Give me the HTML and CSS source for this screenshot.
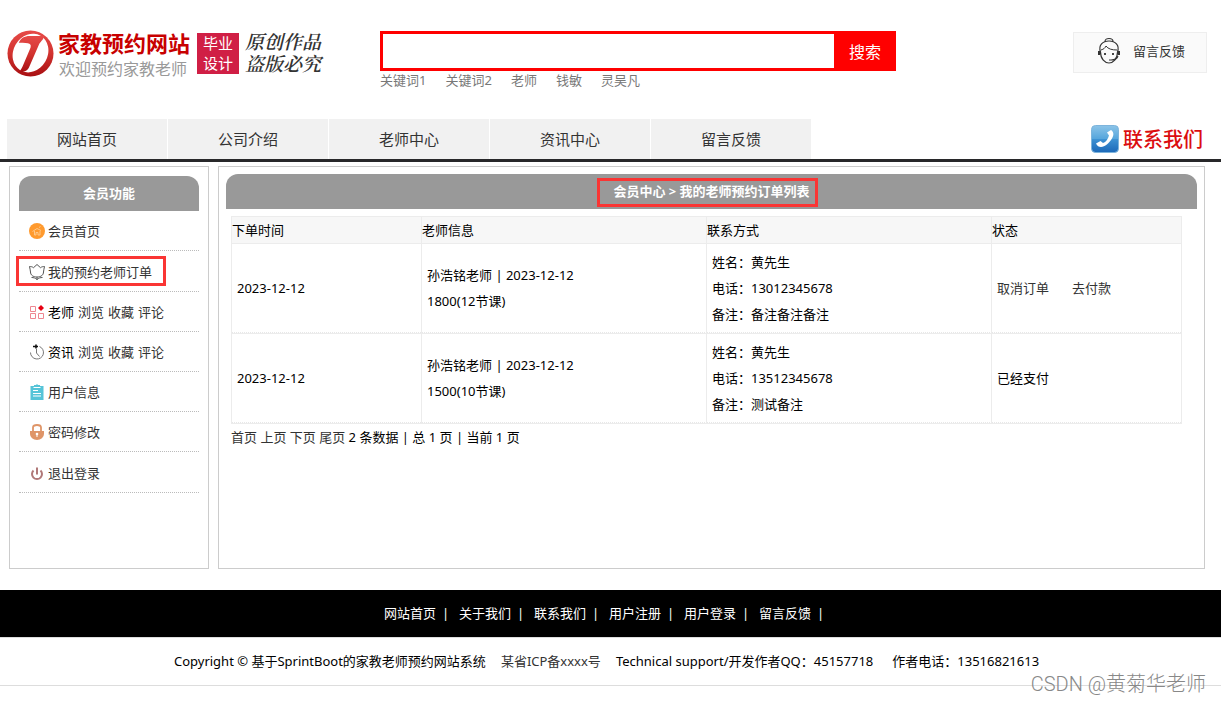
FILE: index.html
```html
<!DOCTYPE html>
<html lang="zh-CN">
<head>
<meta charset="utf-8">
<title>家教预约网站</title>
<link rel="stylesheet" href="styles.css">
</head>
<body>
<header class="header">
  <a class="logo" href="#">
    <svg class="logo-mark" viewBox="0 0 48 48" aria-hidden="true">
      <defs>
        <linearGradient id="ring" x1="0" y1="0" x2="0" y2="1"><stop offset="0" stop-color="#e64a48"/><stop offset="0.5" stop-color="#d2332f"/><stop offset="1" stop-color="#a80f12"/></linearGradient>
      </defs>
      <circle cx="24" cy="24" r="23.5" fill="url(#ring)"/>
      <ellipse cx="24" cy="23.500" rx="17.500" ry="20.500" transform="rotate(30 24 23.500)" fill="#fff"/>
      <path d="M12 13c2-5 6-7 11-7h15c-1 4-3 5-5 8L23 37c-2 5-5 6-11 6 2-2 3-4 4-6l8-19c1-4 0-5-12-5z" fill="url(#ring)"/>
    </svg>
    <span class="logo-text"><strong class="logo-name">家教预约网站</strong><span class="logo-sub">欢迎预约家教老师</span></span>
    <span class="stamp">毕业<br>设计</span>
    <span class="script">原创作品<br>盗版必究</span>
  </a>
  <div class="search">
    <form class="search-form">
      <input class="search-input" type="text" aria-label="搜索关键词">
      <button class="search-button" type="button">搜索</button>
    </form>
    <div class="keywords"><a href="#">关键词1</a><a href="#">关键词2</a><a href="#">老师</a><a href="#">钱敏</a><a href="#">灵吴凡</a></div>
  </div>
  <a class="feedback" href="#">
    <svg class="feedback-icon" viewBox="0 0 24 28" fill="none" stroke="#333" stroke-width="1.200" aria-hidden="true">
      <path d="M8 4.500c0-4 8-4 8 0M3.500 15C1 8 6 4 12 4s11 4 8.500 11c0 7-4.500 11-8.500 11s-8.500-4-8.500-11z"/>
      <path d="M4 13c3-1 4-2 5-4 2 3 6 4 11 4" stroke-width="1"/>
      <path d="M2 14v4M22 14v4" stroke-width="2"/>
      <path d="M8 16v2M16 16v2" stroke-width="1.800"/>
      <path d="M21 19c-1 3-4 4-7 4h-2"/>
    </svg>
    <span>留言反馈</span>
  </a>
</header>
<nav class="nav">
  <div class="nav-items"><a href="#">网站首页</a><a href="#">公司介绍</a><a href="#">老师中心</a><a href="#">资讯中心</a><a href="#">留言反馈</a></div>
  <a class="contact" href="#">
    <svg class="contact-icon" viewBox="0 0 28 28" aria-hidden="true">
      <defs><linearGradient id="blue" x1="0" y1="0" x2="0" y2="1"><stop offset="0" stop-color="#8cc4e8"/><stop offset="0.500" stop-color="#55a5dc"/><stop offset="0.520" stop-color="#3c90d2"/><stop offset="1" stop-color="#1c68b8"/></linearGradient></defs>
      <rect x="0.500" y="0.500" width="27" height="27" rx="4" fill="url(#blue)" stroke="#7db4dc"/>
      <path d="M16 7.500l4-2.500c3 2 3 5 1 8.500-3 5-7 8-11 8.500-2 0-4-1-5-3.500l4.500-2.500 2.500 2c3-1 5-4 6-7.500z" fill="#fff"/>
    </svg>
    联系我们
  </a>
</nav>
<div class="page">
  <aside class="sidebar">
    <h2 class="bar">会员功能</h2>
    <ul class="menu">
      <li><svg class="icon" viewBox="0 0 16 16"><circle cx="8" cy="8" r="8" fill="#ff9a2e"/><path d="M3.500 8.500L8 5.500l4 2M5.500 8v4h1.500V9.500h2V12h2V8M10 4.500l1.500-1" fill="none" stroke="#ffc888"/></svg><a href="#">会员首页</a></li>
      <li class="marked"><svg class="icon" viewBox="0 0 16 16" fill="none" stroke="#555"><path d="M.5 2.500c1.500 0 3 .3 4 1.200L8 .5l3.500 3.200c1-.9 2.500-1.200 4-1.200-.2 2-1 3.500-1 5.500C14.500 11 12 13 8 13S1.500 11 1.500 8c0-2-.8-3.500-1-5.500zM8 13v3M2.500 13.500c2 0 4 .5 5.500 2 1.500-1.500 3.500-2 5.500-2"/></svg><a href="#">我的预约老师订单</a></li>
      <li><svg class="icon" viewBox="0 0 16 16" fill="none" stroke="#ee8791"><path d="M1.500 2.500h5v5h-5zM1.500 9.500h5v5h-5zM9.500 9.500h5v5h-5z"/><path d="M12 1l3 3-3 3-3-3z" fill="#e60012" stroke="none"/></svg><span class="topic"><span>老师</span> <a href="#">浏览</a> <a href="#">收藏</a> <a href="#">评论</a></span></li>
      <li><svg class="icon" viewBox="0 0 16 16" fill="none" stroke="#777"><path d="M10.500 2.500a6.500 6.500 0 1 1-9 6M7.500 5v4l3 3.500"/><path d="M4 2.500h5M7 .5v4" stroke="#111" stroke-width="1.600"/></svg><span class="topic"><span>资讯</span> <a href="#">浏览</a> <a href="#">收藏</a> <a href="#">评论</a></span></li>
      <li><svg class="icon" viewBox="0 0 16 16"><path d="M1.500 2H5V1h2l1-1 1 1h2v1h3.500v14h-13z" fill="#56c4d8"/><path d="M4.500 3.500h7M4 6.500h5M4 9.500h8M4 12h8" stroke="#fff"/></svg><a href="#">用户信息</a></li>
      <li><svg class="icon" viewBox="0 0 16 16"><path d="M4 8V3.500Q4 1 8 1t4 2.500V8" fill="none" stroke="#df9568" stroke-width="1.800"/><path d="M1 7h14v3a7 6 0 0 1-14 0z" fill="#df9568"/><circle cx="8" cy="10" r="1.300" fill="#fff"/><path d="M8 10v3" stroke="#fff"/></svg><a href="#">密码修改</a></li>
      <li class="last"><svg class="icon" viewBox="0 0 16 16" fill="none" stroke="#b07878" stroke-width="2"><path d="M4.500 5.500a5 5 0 1 0 7 0M8 2.500v7"/></svg><a href="#">退出登录</a></li>
    </ul>
  </aside>
  <main class="main">
    <h1 class="bar"><span class="title">会员中心 &gt; 我的老师预约订单列表</span></h1>
    <table class="orders">
      <colgroup><col class="narrow"><col class="wide"><col class="wide"><col class="narrow"></colgroup>
      <thead><tr><th>下单时间</th><th>老师信息</th><th>联系方式</th><th>状态</th></tr></thead>
      <tbody>
        <tr><td>2023-12-12</td><td>孙浩铭老师 | 2023-12-12<br>1800(12节课)</td><td>姓名：黄先生<br>电话：13012345678<br>备注：备注备注备注</td><td><div class="actions"><a href="#">取消订单</a><a href="#">去付款</a></div></td></tr>
        <tr><td>2023-12-12</td><td>孙浩铭老师 | 2023-12-12<br>1500(10节课)</td><td>姓名：黄先生<br>电话：13512345678<br>备注：测试备注</td><td>已经支付</td></tr>
      </tbody>
    </table>
    <p class="pager"><a href="#">首页</a> <a href="#">上页</a> <a href="#">下页</a> <a href="#">尾页</a> 2 条数据 | 总 1 页 | 当前 1 页</p>
  </main>
</div>
<footer class="footer">
  <div class="links"><a href="#">网站首页</a><span>|</span><a href="#">关于我们</a><span>|</span><a href="#">联系我们</a><span>|</span><a href="#">用户注册</a><span>|</span><a href="#">用户登录</a><span>|</span><a href="#">留言反馈</a><span>|</span></div>
  <div class="legal"><span>Copyright © 基于SprintBoot的家教老师预约网站系统</span><a href="#">某省ICP备xxxx号</a><span>Technical support/开发作者QQ：45157718</span><span class="phone">作者电话：13516821613</span></div>
  <span class="watermark">CSDN @黄菊华老师</span>
</footer>
</body>
</html>
```
FILE: styles.css
```css
* { box-sizing: border-box; }
body {
  margin: 0;
  background: #fff;
  color: #000;
  font: 13px/26px "Noto Sans", "Noto Sans CJK SC", sans-serif;
}
a { color: #333; text-decoration: none; }
h1, h2, p, ul { margin: 0; padding: 0; }

.header {
  display: flex;
  align-items: flex-start;
  height: 119px;
  padding: 30px 14px 0 7px;
}
.logo { display: flex; flex: 0 0 373px; }
.logo-mark { width: 47px; height: 47px; }
.logo-text { display: flex; flex-direction: column; margin: 0 7px 0 4px; }
.logo-name { color: #c80000; font-size: 22px; line-height: 26px; }
.logo-sub { padding-left: 1px; color: #999; font-size: 16px; line-height: 26px; }
.stamp {
  height: 41px;
  margin-top: 3px;
  padding: 0 6px;
  background: #d01f45;
  color: #fff;
  font-size: 15px;
  line-height: 20px;
}
.script {
  margin-left: 6px;
  padding-top: 2px;
  color: #333;
  font: italic 600 19px/22px "Liberation Serif", "Noto Serif CJK SC", "Noto Sans CJK SC", serif;
}

.search { flex: 0 1 516px; padding-top: 1px; }
.search-form { display: flex; height: 40px; }
.search-input {
  flex: 1;
  min-width: 0;
  padding: 0 8px;
  border: 3px solid #f00;
  border-right: 0;
  border-radius: 0;
  outline: 0;
  font: inherit;
}
.search-button {
  width: 62px;
  padding: 0;
  border: 0;
  background: #f00;
  color: #fff;
  font: 16px "Noto Sans CJK SC", sans-serif;
}
.keywords { display: flex; gap: 19px; line-height: 18px; }
.keywords a { color: #777; }
.feedback {
  display: flex;
  align-items: center;
  gap: 12px;
  width: 134px;
  height: 41px;
  margin: 2px 0 0 auto;
  padding: 0 0 3px 23px;
  border: 1px solid #eee;
  background: #fafafa;
}
.feedback-icon { width: 24px; height: 28px; }

.nav {
  display: flex;
  justify-content: space-between;
  padding: 0 18px 0 7px;
  border-bottom: 3px solid #28282a;
}
.nav-items { display: flex; gap: 1px; }
.nav-items a {
  width: 160px;
  background: #f1f1f1;
  font-size: 15px;
  line-height: 40px;
  text-align: center;
}
.contact {
  display: flex;
  align-items: center;
  gap: 4px;
  color: #db0d10;
  font-size: 20px;
  font-weight: 500;
  font-family: "Noto Sans CJK SC", sans-serif;
}
.contact-icon { width: 28px; height: 28px; }

.page { display: flex; gap: 9px; padding: 4px 16px 21px 9px; }
.sidebar { flex: 0 0 200px; padding: 9px; border: 1px solid #ccc; }
.main { flex: 1; min-height: 403px; padding: 7px; border: 1px solid #ccc; }
.bar {
  border-radius: 12px 12px 0 0;
  background: #999;
  color: #fff;
  font-size: 13px;
  line-height: 35px;
  text-align: center;
}
.menu { list-style: none; }
.menu li {
  display: flex;
  align-items: center;
  gap: 3px;
  height: 40px;
  padding: 1px 0 0 10px;
  border-bottom: 1px dotted #bbb;
}
.topic { display: flex; gap: 4px; }
.icon { flex: none; width: 16px; height: 16px; }
.menu .marked { position: relative; height: 41px; }
.menu .last { height: 41px; }
.marked::after {
  content: "";
  position: absolute;
  inset: 5px 33px 5px -3px;
  border: 3px solid #fa3534;
}
.title { position: relative; }
.title::after {
  content: "";
  position: absolute;
  inset: -4px -8px -7px -16px;
  border: 3px solid #fa3534;
}

.orders {
  width: calc(100% - 20px);
  margin: 7px 15px 0 5px;
  border-collapse: collapse;
  table-layout: fixed;
}
.narrow { width: 20%; }
.wide { width: 30%; }
.orders th, .orders td { border: 1px solid #ececec; text-align: left; }
.orders th { padding: 0; background: #f7f7f7; font-weight: normal; }
.orders td {
  height: 90px;
  padding: 4px 5px 6px;
  background: repeating-linear-gradient(90deg, #e8e8e8 0 1px, #fff 1px 2px) bottom / 100% 1px no-repeat;
}
.actions { display: flex; gap: 23px; }
.pager { padding-left: 5px; }

.footer { position: relative; padding-bottom: 17px; }
.links {
  display: flex;
  justify-content: center;
  padding-right: 3px;
  background: #000;
  color: #fff;
  line-height: 47px;
}
.links a { color: #fff; }
.links span { width: 23px; padding-right: 4px; text-align: center; }
.legal {
  display: flex;
  justify-content: center;
  gap: 15px;
  padding-right: 8px;
  border-top: 1px solid #ddd;
  border-bottom: 1px solid #ddd;
  line-height: 47px;
}
.phone { padding-left: 4px; }
.watermark {
  position: absolute;
  right: 15px;
  bottom: 5px;
  color: #888;
  font: 300 20px/28px Roboto, "Noto Sans CJK SC", sans-serif;
}
```
